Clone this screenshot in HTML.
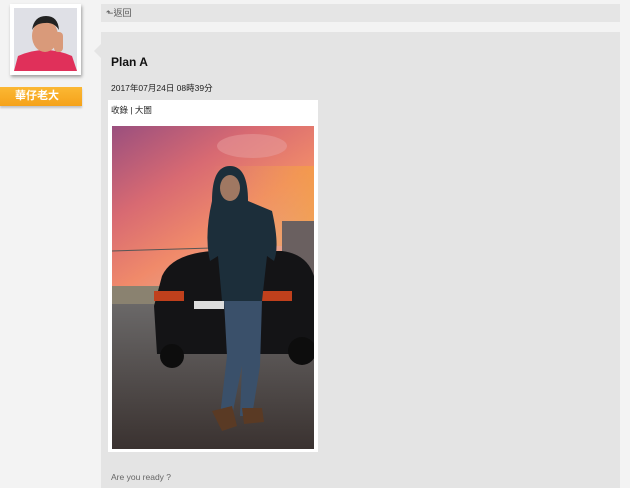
<!DOCTYPE html>
<html><head><meta charset="utf-8"><style>
body{margin:0;width:630px;height:488px;background:#f3f3f3;font-family:"Liberation Sans","Noto Sans CJK TC",sans-serif;position:relative;overflow:hidden}
.top{position:absolute;left:101px;top:4px;width:519px;height:18px;background:#e5e5e5;font-size:9px;color:#555;line-height:18px;padding-left:5px;box-sizing:border-box}
.main{position:absolute;left:101px;top:32px;width:519px;height:456px;background:#e4e4e4}
.tri{position:absolute;left:94px;top:44px;width:0;height:0;border-top:7px solid transparent;border-bottom:7px solid transparent;border-right:7px solid #e4e4e4}
.av{position:absolute;left:10px;top:4px;width:71px;height:71px;background:#fff;box-shadow:1px 2px 3px rgba(0,0,0,.35)}
.av .ph{position:absolute;left:4px;top:4px;width:63px;height:63px;background:#dcdde2;overflow:hidden}
.lab{position:absolute;left:0;top:87px;width:82px;height:19px;background:linear-gradient(#fbb834,#f5a21a);color:#fff;font-weight:bold;font-size:11px;line-height:19px;padding-left:15px;box-sizing:border-box;box-shadow:0 2px 2px rgba(0,0,0,.2)}
h1{position:absolute;left:111px;top:55px;margin:0;font-size:12px;font-weight:bold;color:#111}
.date{position:absolute;left:111px;top:82px;font-size:8.5px;color:#222}
.card{position:absolute;left:108px;top:100px;width:210px;height:352px;background:#fff}
.card .t{position:absolute;left:3px;top:4px;font-size:8.5px;color:#222}
.card svg{position:absolute;left:4px;top:26px}
.ready{position:absolute;left:111px;top:472px;font-size:8.5px;color:#666}
</style></head><body>
<div class="top">&#x2B11;返回</div>
<div class="main"></div><div class="tri"></div>
<div class="av"><div class="ph">
<svg width="63" height="63"><rect width="63" height="63" fill="#dfe0e6"/><path d="M0 63 L4 48 Q31 36 58 48 L63 63Z" fill="#e0305a"/><ellipse cx="31" cy="28" rx="13" ry="16" fill="#d99a7a"/><path d="M18 22 Q20 8 32 8 Q44 8 45 22 Q40 14 31 15 Q22 15 18 22Z" fill="#222"/><rect x="40" y="24" width="9" height="20" rx="4" fill="#d99a7a"/></svg>
</div></div>
<div class="lab">華仔老大</div>
<h1>Plan A</h1>
<div class="date">2017年07月24日 08時39分</div>
<div class="card"><div class="t">收錄 | 大圖</div>
<svg width="202" height="323" viewBox="0 0 202 323">
<defs><linearGradient id="s" x1="0" y1="0" x2="0.4" y2="1"><stop offset="0" stop-color="#9a4f7e"/><stop offset=".25" stop-color="#d86a72"/><stop offset=".45" stop-color="#f08a6a"/><stop offset=".6" stop-color="#e8a08a"/></linearGradient>
<linearGradient id="o" x1="0" y1="0" x2="1" y2="0"><stop offset="0" stop-color="#f0a060" stop-opacity="0"/><stop offset="1" stop-color="#f5a040" stop-opacity=".7"/></linearGradient>
<linearGradient id="g" x1="0" y1="0" x2="0" y2="1"><stop offset="0" stop-color="#6a6868"/><stop offset="1" stop-color="#3a3230"/></linearGradient></defs>
<rect width="202" height="323" fill="url(#s)"/>
<rect x="100" y="40" width="102" height="80" fill="url(#o)"/>
<rect x="0" y="160" width="202" height="20" fill="#8a8270"/>
<rect x="0" y="178" width="202" height="145" fill="url(#g)"/>
<line x1="0" y1="125" x2="100" y2="122" stroke="#555" stroke-width="1"/>
<rect x="170" y="95" width="32" height="85" fill="#6a6060"/>
<path d="M42 180 L50 150 Q60 128 100 125 L170 125 Q195 128 202 150 L202 228 L45 228 Z" fill="#141416"/>
<rect x="42" y="165" width="30" height="10" fill="#c0401c"/><rect x="150" y="165" width="30" height="10" fill="#c0401c"/>
<rect x="82" y="175" width="30" height="8" fill="#ddd"/>
<circle cx="60" cy="230" r="12" fill="#0d0d0d"/><circle cx="190" cy="225" r="14" fill="#0d0d0d"/>
<path d="M100 75 Q100 40 118 40 Q136 40 136 75 L160 85 Q168 120 162 135 L155 130 L150 175 L110 175 L106 130 L98 135 Q92 110 100 75Z" fill="#1c2e3a"/>
<ellipse cx="118" cy="62" rx="10" ry="13" fill="#a07862"/>
<path d="M112 175 L150 175 L148 240 L140 290 L128 290 L130 240 L120 290 L108 290 L115 230Z" fill="#3a506a"/>
<path d="M100 285 L120 280 L125 300 L110 305Z" fill="#5a3a24"/><path d="M130 282 L150 282 L152 296 L132 298Z" fill="#5a3a24"/>
<ellipse cx="140" cy="20" rx="35" ry="12" fill="#e8a0a0" opacity=".5"/>
</svg></div>
<div class="ready">Are you ready ?</div>
</body></html>
